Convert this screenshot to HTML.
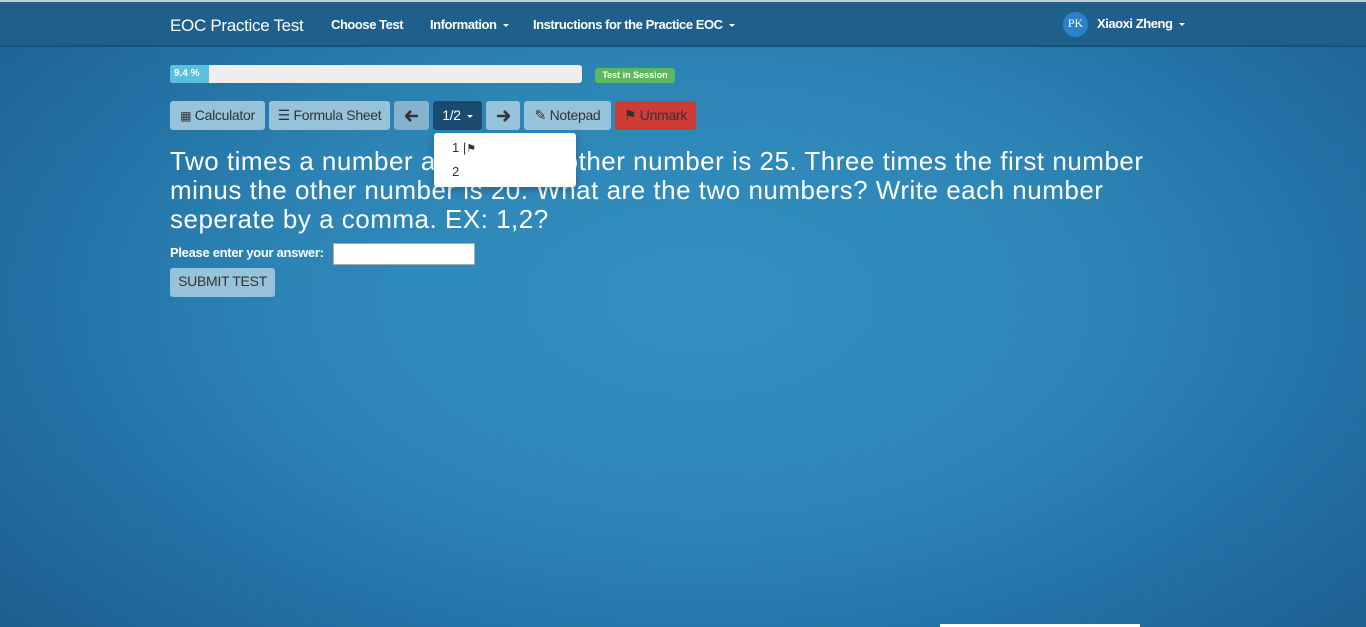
<!DOCTYPE html>
<html><head><meta charset="utf-8"><style>
*{box-sizing:border-box;margin:0;padding:0}
body{width:1366px;height:627px;overflow:hidden;font-family:"Liberation Sans",Arial,sans-serif;position:relative;
background:radial-gradient(ellipse 900px 500px at 700px 300px,#3290c0 0%,#2d85b6 45%,#2370a3 75%,#1d5f90 100%);}
.top{position:absolute;left:0;top:0;width:1366px;height:2px;background:#c8ccd0}
.nav{position:absolute;left:0;top:2px;width:1366px;height:45px;background:#1f5f8b;border-bottom:2px solid #1a537a;color:#fff}
.nav span{position:absolute;top:15px;font-size:13px;font-weight:bold;letter-spacing:-0.45px}
.car{display:inline-block;width:0;height:0;border-left:3.5px solid transparent;border-right:3.5px solid transparent;border-top:3.5px solid #fff;vertical-align:middle;margin-left:6px}
.btn{position:absolute;top:101px;height:29px;border-radius:3px;background:#97c3da;color:#333;font-size:14px;line-height:29px;text-align:center;letter-spacing:-0.3px}
.q{position:absolute;left:170px;top:147px;width:1000px;color:#fff;font-size:26px;line-height:29px;letter-spacing:0.5px}
</style></head><body>
<div class="top"></div>
<div class="nav">
<span style="left:170px;top:14px;font-size:17px;font-weight:normal;letter-spacing:-0.3px">EOC Practice Test</span>
<span style="left:331px">Choose Test</span>
<span style="left:430px">Information<i class="car"></i></span>
<span style="left:533px">Instructions for the Practice EOC<i class="car"></i></span>
<div style="position:absolute;left:1063px;top:10px;width:25px;height:25px;border-radius:50%;background:#2a83c8;color:#fff;font-family:'Liberation Serif',serif;font-size:12px;text-align:center;line-height:22px">PK</div>
<span style="left:1097px;top:14px">Xiaoxi Zheng<i class="car"></i></span>
</div>
<div style="position:absolute;left:170px;top:65px;width:412px;height:18px;background:#eeeeee;border-radius:3px;overflow:hidden"><div style="width:39px;height:18px;background:#5bc0de;color:#fff;font-size:10px;font-weight:bold;line-height:18px;padding-left:4px">9.4 %</div></div>
<div style="position:absolute;left:595px;top:68px;width:80px;height:15px;background:#5cb85c;border-radius:3px;color:#fff;font-size:9px;font-weight:bold;text-align:center;line-height:15px">Test in Session</div>
<div class="btn" style="left:170px;width:95px"><span style="font-size:12px">▦</span> Calculator</div>
<div class="btn" style="left:269px;width:121px">☰ Formula Sheet</div>
<div class="btn" style="left:394px;width:35px;background:#85b2cc"><svg width="14" height="12" viewBox="0 0 14 12" style="vertical-align:middle"><path d="M1 6H13M6 1L1 6L6 11" stroke="#333" stroke-width="2.6" fill="none"/></svg></div>
<div class="btn" style="left:433px;width:49px;background:#1c4b72;color:#fff">1/2<i class="car"></i></div>
<div class="btn" style="left:486px;width:34px"><svg width="14" height="12" viewBox="0 0 14 12" style="vertical-align:middle"><path d="M1 6H13M8 1L13 6L8 11" stroke="#333" stroke-width="2.6" fill="none"/></svg></div>
<div class="btn" style="left:524px;width:87px">✎ Notepad</div>
<div class="btn" style="left:615px;width:81px;background:#cf3b35;color:#333">⚑ Unmark</div>
<div class="q">Two times a number added to another number is 25. Three times the first number minus the other number is 20. What are the two numbers? Write each number seperate by a comma. EX: 1,2?</div>
<div style="position:absolute;left:434px;top:133px;width:142px;height:54px;background:#fff;border-radius:3px;box-shadow:0 3px 8px rgba(0,0,0,.25);font-size:13px;color:#333">
<div style="position:absolute;left:18px;top:7px">1 |<span style="font-size:11px">⚑</span></div>
<div style="position:absolute;left:18px;top:31px">2</div></div>
<div style="position:absolute;left:170px;top:245px;color:#fff;font-size:13px;font-weight:bold;letter-spacing:-0.3px">Please enter your answer:</div>
<div style="position:absolute;left:333px;top:243px;width:142px;height:22px;background:#fff;border:1px solid #aaa"></div>
<div style="position:absolute;left:170px;top:268px;width:105px;height:29px;background:#97c3da;border-radius:3px;color:#333;font-size:14px;line-height:27px;text-align:center;letter-spacing:-0.3px">SUBMIT TEST</div>
<div style="position:absolute;left:940px;top:624px;width:200px;height:3px;background:#fff"></div>
</body></html>
